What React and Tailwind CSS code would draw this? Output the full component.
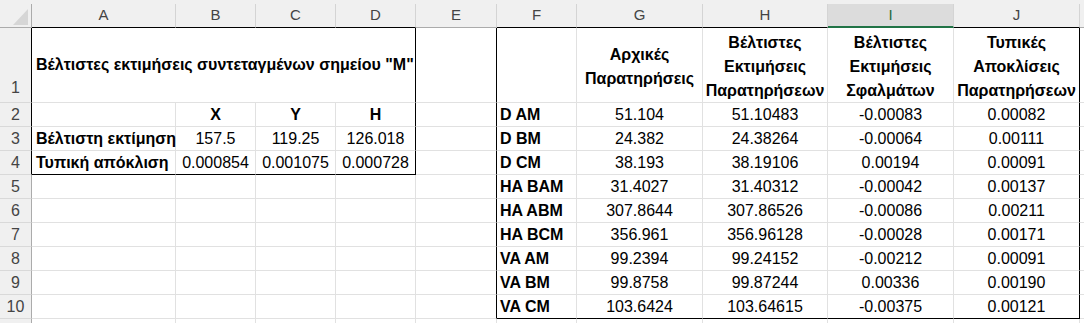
import React from 'react';

const cols = [
  { key: 'A', w: 'w-[144px]' },
  { key: 'B', w: 'w-[80px]' },
  { key: 'C', w: 'w-[80px]' },
  { key: 'D', w: 'w-[80px]' },
  { key: 'E', w: 'w-[81px]' },
  { key: 'F', w: 'w-[80px]' },
  { key: 'G', w: 'w-[126px]' },
  { key: 'H', w: 'w-[125px]' },
  { key: 'I', w: 'w-[126px]' },
  { key: 'J', w: 'w-[126px]' },
];

const obs = [
  ['D AM', '51.104', '51.10483', '-0.00083', '0.00082'],
  ['D BM', '24.382', '24.38264', '-0.00064', '0.00111'],
  ['D CM', '38.193', '38.19106', '0.00194', '0.00091'],
  ['HA BAM', '31.4027', '31.40312', '-0.00042', '0.00137'],
  ['HA ABM', '307.8644', '307.86526', '-0.00086', '0.00211'],
  ['HA BCM', '356.961', '356.96128', '-0.00028', '0.00171'],
  ['VA AM', '99.2394', '99.24152', '-0.00212', '0.00091'],
  ['VA BM', '99.8758', '99.87244', '0.00336', '0.00190'],
  ['VA CM', '103.6424', '103.64615', '-0.00375', '0.00121'],
];

const left = [
  null,
  ['', 'X', 'Y', 'H'],
  ['Βέλτιστη εκτίμηση', '157.5', '119.25', '126.018'],
  ['Τυπική απόκλιση', '0.000854', '0.001075', '0.000728'],
];

const headers = [
  'Αρχικές\nΠαρατηρήσεις',
  'Βέλτιστες\nΕκτιμήσεις\nΠαρατηρήσεων',
  'Βέλτιστες\nΕκτιμήσεις\nΣφαλμάτων',
  'Τυπικές\nΑποκλίσεις\nΠαρατηρήσεων',
];

const Cell = ({ w, className = '', children }) => (
  <div className={`${w} shrink-0 h-full flex items-center border-r border-b whitespace-nowrap ${className}`}>
    {children}
  </div>
);

const RowHead = ({ n, dark, className = '' }) => (
  <div className={`w-[32px] shrink-0 h-full flex justify-center bg-[#f0f0f0] text-[#444] border-b border-b-[#d9d9d9] border-r ${dark ? 'border-r-black' : 'border-r-[#ababab]'} ${className}`}>
    {n}
  </div>
);

export default function App() {
  const grid = 'border-[#e1e1e1]';
  return (
    <div className="w-[1084px] h-[323px] overflow-hidden bg-white font-['Liberation_Sans',Arial,sans-serif] text-[16px] text-black">
      <div className="h-[4px] bg-[#f0f0f0]" />
      {/* column headers */}
      <div className="flex h-[24px] bg-[#f0f0f0] text-[#444] text-[15px]">
        <div className="w-[32px] shrink-0 h-full border-r border-b border-[#ababab] relative">
          <svg width="32" height="24" className="absolute left-0 top-0">
            <polygon points="13,21 28,21 28,5" fill="#d6d6d6" />
          </svg>
        </div>
        {cols.map((c) => {
          const inTable = c.key !== 'E';
          const sel = c.key === 'I';
          return (
            <div
              key={c.key}
              className={`${c.w} shrink-0 h-full flex items-center justify-center border-r border-r-[#d4d4d4] ${
                sel ? 'bg-[#dcdcdc] text-[#1e6b40] border-b-2 border-b-[#217346]' : inTable ? 'border-b border-b-black' : 'border-b border-b-[#ababab]'
              }`}
            >
              {c.key}
            </div>
          );
        })}
        <div className="flex-1 h-full border-b border-[#ababab]" />
      </div>

      {/* row 1 */}
      <div className="flex h-[75px]">
        <RowHead n="1" dark className="items-end pb-[2px]" />
        <Cell w="w-[384px]" className={`${grid} border-r-black px-[4px] font-bold`}>
          Βέλτιστες εκτιμήσεις συντεταγμένων σημείου "M"
        </Cell>
        <Cell w="w-[81px]" className={`${grid} border-r-black`} />
        <Cell w="w-[80px]" className={grid} />
        {headers.map((t, i) => (
          <Cell
            key={i}
            w={cols[6 + i].w}
            className={`${grid} ${i === 3 ? 'border-r-black' : ''} justify-center text-center font-bold leading-[24px] whitespace-pre-line pt-[4px]`}
          >
            {t}
          </Cell>
        ))}
        <div className={`flex-1 h-full border-b ${grid}`} />
      </div>

      {/* rows 2-11 */}
      {Array.from({ length: 10 }).map((_, r) => {
        const rowNo = r + 2;
        const L = left[r + 1];
        const O = obs[r];
        const inT1 = rowNo <= 4;
        const lastT1 = rowNo === 4;
        const inT2 = rowNo <= 10;
        const lastT2 = rowNo === 10;
        return (
          <div key={rowNo} className="flex h-[24px]">
            <RowHead n={rowNo <= 10 ? rowNo : ''} dark={inT1} className="items-center" />
            {[0, 1, 2, 3].map((c) => (
              <Cell
                key={c}
                w={cols[c].w}
                className={`${grid} ${lastT1 ? 'border-b-black' : ''} ${c === 3 && inT1 ? 'border-r-black' : ''} ${
                  c === 0 ? 'px-[4px] font-bold' : 'justify-center'
                } ${rowNo === 2 ? 'font-bold' : ''}`}
              >
                {L ? L[c] : ''}
              </Cell>
            ))}
            <Cell w={cols[4].w} className={`${grid} ${inT2 ? 'border-r-black' : ''}`} />
            {[0, 1, 2, 3, 4].map((c) => (
              <Cell
                key={c}
                w={cols[5 + c].w}
                className={`${grid} ${lastT2 ? 'border-b-black' : ''} ${c === 4 && inT2 ? 'border-r-black' : ''} ${
                  c === 0 ? 'px-[3px] font-bold' : 'justify-center'
                }`}
              >
                {O ? O[c] : ''}
              </Cell>
            ))}
            <div className={`flex-1 h-full border-b ${grid}`} />
          </div>
        );
      })}
    </div>
  );
}
